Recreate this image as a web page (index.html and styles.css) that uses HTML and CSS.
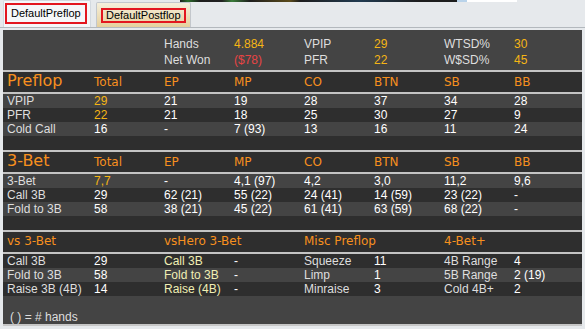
FILE: index.html
```html
<!DOCTYPE html>
<html>
<head>
<meta charset="utf-8">
<link rel="stylesheet" href="styles.css">
</head>
<body>
<div class="tabs">
  <div class="tab tab-active"><span class="tab-label">DefaultPreflop</span></div>
  <div class="tab tab-inactive"><span class="tab-label">DefaultPostflop</span></div>
</div>
<div class="panel">
  <div class="summary">
    <div class="grid srow"><span></span><span></span><span class="lbl">Hands</span><span class="gold">4.884</span><span class="lbl">VPIP</span><span class="gold">29</span><span class="lbl">WTSD%</span><span class="gold">30</span></div>
    <div class="grid srow"><span></span><span></span><span class="lbl">Net Won</span><span class="red">($78)</span><span class="lbl">PFR</span><span class="gold">22</span><span class="lbl">W$SD%</span><span class="gold">45</span></div>
  </div>
  <div class="sep"></div>
  <div class="grid head"><span class="title">Preflop</span><span class="ch">Total</span><span class="ch">EP</span><span class="ch">MP</span><span class="ch">CO</span><span class="ch">BTN</span><span class="ch">SB</span><span class="ch">BB</span></div>
  <div class="sep"></div>
  <div class="grid row light"><span class="lbl">VPIP</span><span class="gold">29</span><span>21</span><span>19</span><span>28</span><span>37</span><span>34</span><span>28</span></div>
  <div class="grid row dark"><span class="lbl">PFR</span><span class="gold">22</span><span>21</span><span>18</span><span>25</span><span>30</span><span>27</span><span>9</span></div>
  <div class="grid row light"><span class="lbl">Cold Call</span><span>16</span><span>-</span><span>7 (93)</span><span>13</span><span>16</span><span>11</span><span>24</span></div>
  <div class="row dark"></div>
  <div class="sep"></div>
  <div class="grid head"><span class="title">3-Bet</span><span class="ch">Total</span><span class="ch">EP</span><span class="ch">MP</span><span class="ch">CO</span><span class="ch">BTN</span><span class="ch">SB</span><span class="ch">BB</span></div>
  <div class="sep"></div>
  <div class="grid row light"><span class="lbl">3-Bet</span><span class="gold">7,7</span><span>-</span><span>4,1 (97)</span><span>4,2</span><span>3,0</span><span>11,2</span><span>9,6</span></div>
  <div class="grid row dark"><span class="lbl">Call 3B</span><span>29</span><span>62 (21)</span><span>55 (22)</span><span>24 (41)</span><span>14 (59)</span><span>23 (22)</span><span>-</span></div>
  <div class="grid row light"><span class="lbl">Fold to 3B</span><span>58</span><span>38 (21)</span><span>45 (22)</span><span>61 (41)</span><span>63 (59)</span><span>68 (22)</span><span>-</span></div>
  <div class="row dark"></div>
  <div class="sep"></div>
  <div class="grid head head-small"><span class="ch">vs 3-Bet</span><span></span><span class="ch">vsHero 3-Bet</span><span></span><span class="ch">Misc Preflop</span><span></span><span class="ch">4-Bet+</span><span></span></div>
  <div class="sep"></div>
  <div class="grid row dark"><span class="lbl">Call 3B</span><span>29</span><span class="hero">Call 3B</span><span>-</span><span class="lbl">Squeeze</span><span>11</span><span class="lbl">4B Range</span><span>4</span></div>
  <div class="grid row light"><span class="lbl">Fold to 3B</span><span>58</span><span class="hero">Fold to 3B</span><span>-</span><span class="lbl">Limp</span><span>1</span><span class="lbl">5B Range</span><span>2 (19)</span></div>
  <div class="grid row dark"><span class="lbl">Raise 3B (4B)</span><span>14</span><span class="hero">Raise (4B)</span><span>-</span><span class="lbl">Minraise</span><span>3</span><span class="lbl">Cold 4B+</span><span>2</span></div>
  <div class="footnote"><span class="lbl">( ) = # hands</span></div>
</div>
</body>
</html>
```
FILE: styles.css
```css
html, body {
  margin: 0;
  padding: 0;
}
body {
  width: 585px;
  height: 329px;
  overflow: hidden;
  font-family: "Liberation Sans", Arial, sans-serif;
  font-size: 12px;
  background:
    linear-gradient(to right,
      transparent 0, transparent 180px,
      #1d1d1d 180px, #2a6e2a 188px, #1d1d1d 200px,
      #222 222px, #3a7d3a 232px, #1d1d1d 250px,
      #5a4a1a 290px, #1d1d1d 300px, #213a50 360px, #1d1d1d 420px,
      #1d1d1d 457px, #b9d3ea 457px, #b9d3ea 467px,
      #ffffff 467px, #ffffff 517px, transparent 517px) top left / 100% 2px no-repeat,
    #e6e9ec;
}

/* Tabs */
.tabs {
  display: flex;
  align-items: flex-end;
  gap: 5px;
  height: 28px;
  box-sizing: border-box;
  padding: 1px 0 0 3px;
  border-bottom: 1px solid #b3b8bd;
  margin-bottom: 2px;
}
.tab {
  box-sizing: border-box;
  border: 1px solid #c3c7cc;
  border-bottom: none;
  border-radius: 2px 2px 0 0;
  display: flex;
  align-items: flex-start;
  font-size: 11px;
  color: #000;
}
.tab-label {
  border: 2px solid #e3161f;
  white-space: nowrap;
}
.tab-active {
  width: 88px;
  height: 27px;
  padding: 2px 0 0 1px;
  background: #f5f7f9;
  border-color: #d3d9df;
}
.tab-active .tab-label {
  padding: 0 4px;
  line-height: 17px;
}
.tab-inactive {
  width: 95px;
  height: 25px;
  padding: 5px 0 0 4px;
  background: linear-gradient(to bottom, #f5efdc, #e6d09c);
}
.tab-inactive .tab-label {
  padding: 0 3px;
  line-height: 11px;
}

/* Panel */
.panel {
  margin: 0 3px;
  width: 579px;
  height: 294px;
  background: #444444;
  display: flex;
  flex-direction: column;
  border-bottom: 2px solid #c6c6c6;
}
.grid {
  display: grid;
  grid-template-columns: 87px repeat(6, 70px) 1fr;
  padding-left: 4px;
  color: #ffffff;
  white-space: nowrap;
}
.summary {
  height: 40px;
  box-sizing: border-box;
  padding-top: 6px;
}
.srow {
  line-height: 16px;
  height: 16px;
}
.sep {
  height: 2px;
  background: #c4c4c4;
  flex: none;
}
.head {
  height: 20px;
  background: #2e2e2e;
  align-items: baseline;
  font-family: "DejaVu Sans", Verdana, sans-serif;
  line-height: 20px;
  flex: none;
}
.title {
  font-size: 16px;
  color: #f7901e;
  line-height: 18px;
}
.ch {
  font-size: 12px;
  color: #f7901e;
}
.head-small {
  line-height: 19px;
}
.row {
  height: 14px;
  line-height: 14px;
  flex: none;
}
.light { background: #444444; }
.dark { background: #2e2e2e; }
.lbl { color: #dedede; }
.gold { color: #f5b515; }
.red { color: #e84444; }
.hero { color: #f0efb4; }
.footnote {
  flex: 1;
  display: flex;
  align-items: flex-end;
  padding: 0 0 0 7px;
  line-height: 14px;
}
```
